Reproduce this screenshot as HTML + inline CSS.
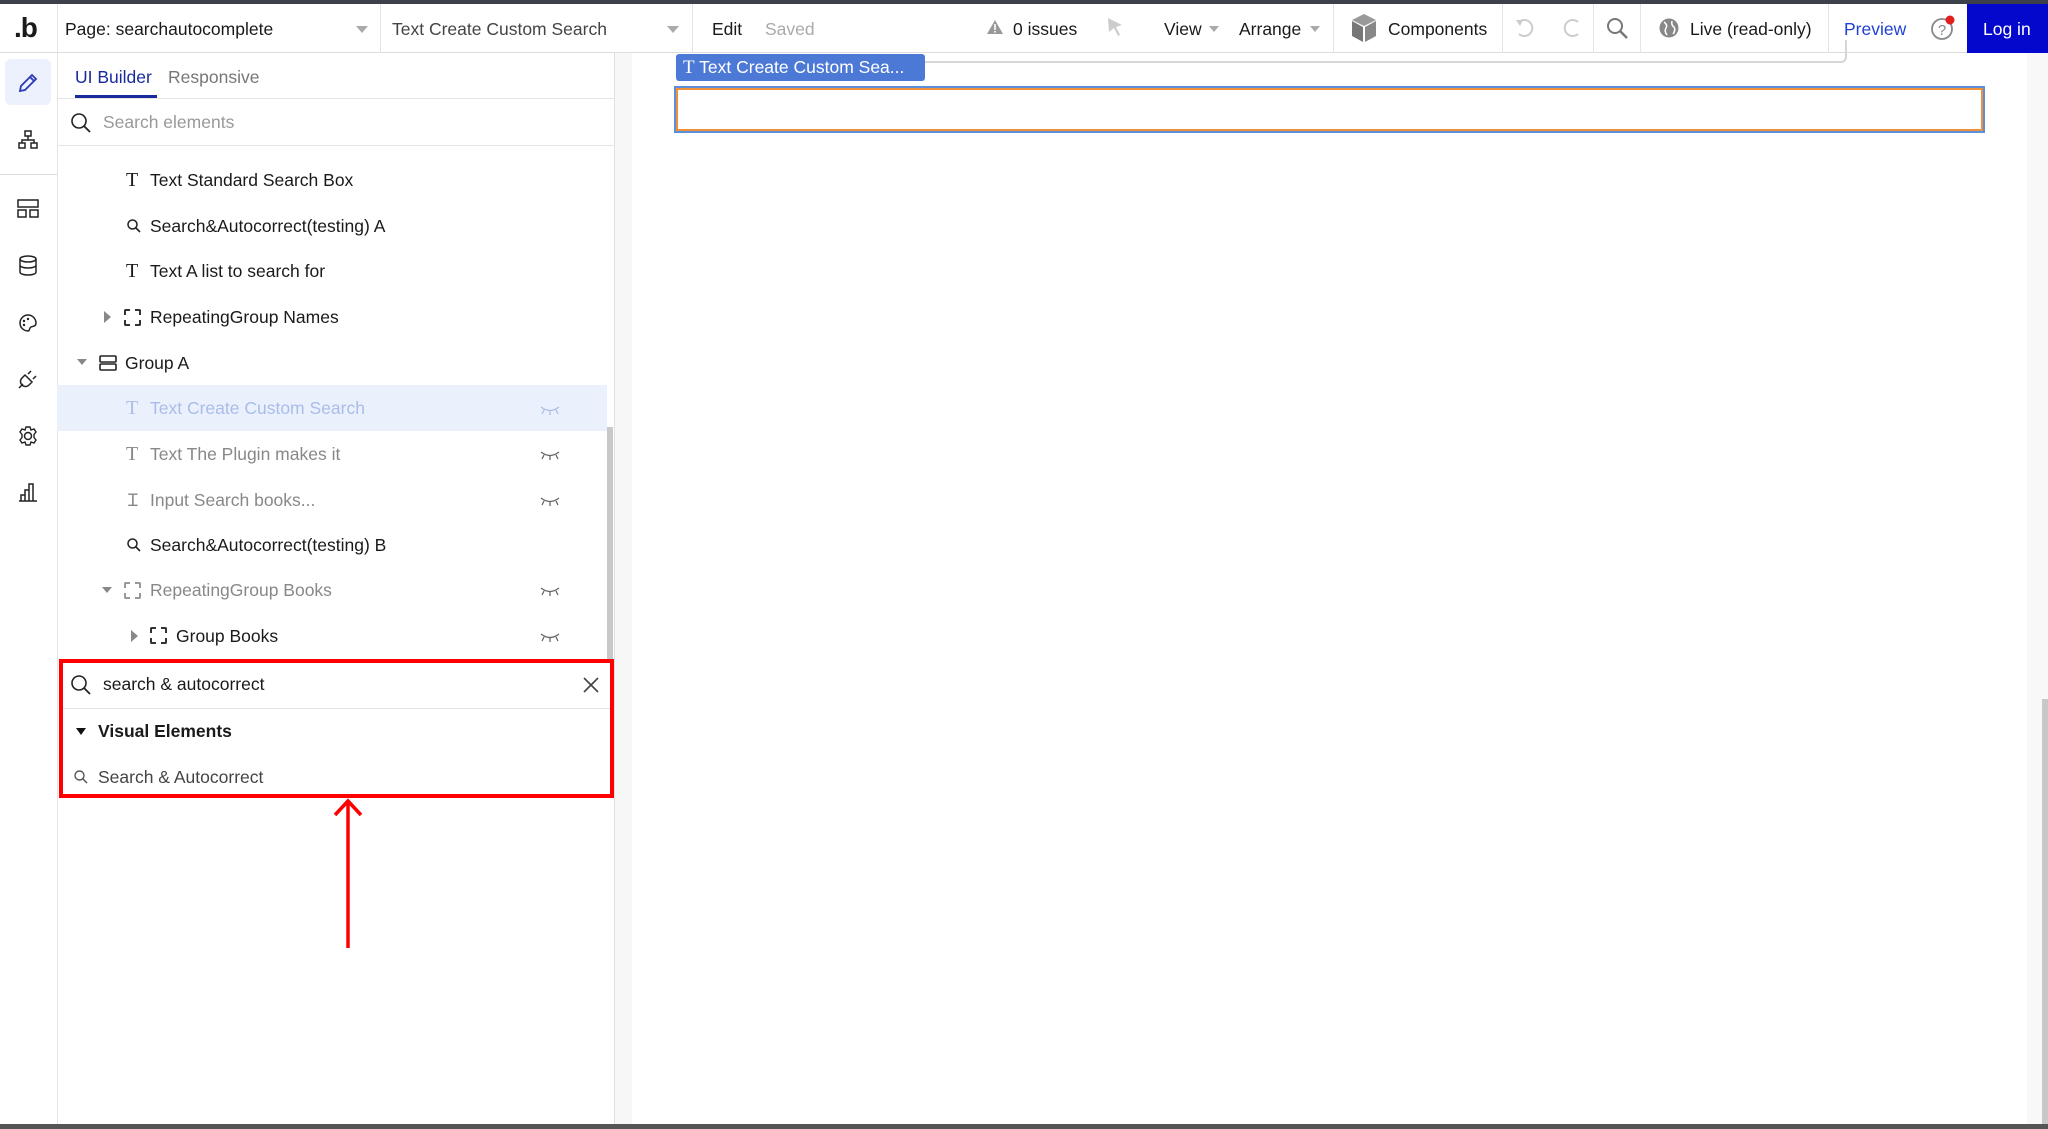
<!DOCTYPE html>
<html><head><meta charset="utf-8"><style>
*{box-sizing:border-box;margin:0;padding:0}
body{width:2048px;height:1129px;position:relative;overflow:hidden;background:#fff;font-family:"Liberation Sans",sans-serif;color:#1a1a1a}
.a{position:absolute}
.t{position:absolute;white-space:nowrap;font-size:17.5px;line-height:22px}
.vd{position:absolute;top:4px;width:1px;height:49px;background:#e4e4e4}
.car{position:absolute;width:0;height:0;border-left:6px solid transparent;border-right:6px solid transparent;border-top:7px solid #aaa}
svg{position:absolute;overflow:visible}
</style></head><body>
<div class="a" style="left:0;top:0;width:2048px;height:4px;background:#3b404b"></div>
<div class="a" style="left:0;top:4px;width:2048px;height:49px;background:#fff;border-bottom:1px solid #dcdcdc"></div>
<div class="t" style="left:14px;top:14px;font-size:28px;font-weight:bold;line-height:28px;letter-spacing:-1px">.b</div>
<div class="vd" style="left:57px"></div>
<div class="t" style="left:65px;top:18px">Page: searchautocomplete</div>
<div class="car" style="left:356px;top:26px"></div>
<div class="vd" style="left:380px"></div>
<div class="t" style="left:392px;top:18px;color:#444">Text Create Custom Search</div>
<div class="car" style="left:667px;top:26px"></div>
<div class="vd" style="left:692px"></div>
<div class="t" style="left:712px;top:18px">Edit</div>
<div class="t" style="left:765px;top:18px;color:#aaa">Saved</div>
<svg style="left:986px;top:19px" width="18" height="16"><path d="M9 1L17 15H1Z" fill="#999"/><rect x="8.2" y="5" width="1.6" height="6" fill="#fff"/><rect x="8.2" y="12" width="1.6" height="1.6" fill="#fff"/></svg>
<div class="t" style="left:1013px;top:18px">0 issues</div>
<svg style="left:1106px;top:17px" width="18" height="20"><path d="M2 1L16 8L10 10L14 18L12 19L8 11L3 15Z" fill="#ccc"/></svg>
<div class="t" style="left:1164px;top:18px">View</div>
<div class="car" style="left:1209px;top:26px;border-width:6px 5px 0"></div>
<div class="t" style="left:1239px;top:18px">Arrange</div>
<div class="car" style="left:1310px;top:26px;border-width:6px 5px 0"></div>
<div class="vd" style="left:1333px"></div>
<svg style="left:1351px;top:13px" width="26" height="30"><path d="M13 1L25 7L13 13L1 7Z" fill="#999"/><path d="M1 8L12 14V29L1 23Z" fill="#777"/><path d="M25 8L14 14V29L25 23Z" fill="#888"/></svg>
<div class="t" style="left:1388px;top:18px">Components</div>
<div class="vd" style="left:1502px"></div>
<svg style="left:1514px;top:17px" width="22" height="22"><path d="M5 5A8 8 0 1 1 5 17" fill="none" stroke="#ccc" stroke-width="2"/><path d="M2 3L6 9L9 3Z" fill="#ccc"/></svg>
<svg style="left:1561px;top:17px" width="22" height="22"><path d="M17 5A8 8 0 1 0 17 17" fill="none" stroke="#ccc" stroke-width="2"/></svg>
<div class="vd" style="left:1593px"></div>
<svg style="left:1606px;top:17px" width="24" height="24"><circle cx="9" cy="9" r="7" fill="none" stroke="#777" stroke-width="2"/><path d="M14 14L21 21" stroke="#777" stroke-width="2.5"/></svg>
<div class="vd" style="left:1640px"></div>
<svg style="left:1659px;top:18px" width="20" height="20"><circle cx="10" cy="10" r="9.5" fill="#888"/><path d="M5 4Q9 7 7 10Q5 13 8 17M13 3Q12 7 15 9Q17 12 14 16" stroke="#fff" stroke-width="1.5" fill="none"/></svg>
<div class="t" style="left:1690px;top:18px">Live (read-only)</div>
<div class="vd" style="left:1828px"></div>
<div class="t" style="left:1844px;top:18px;color:#1f3fd6">Preview</div>
<svg style="left:1930px;top:15px" width="28" height="28"><circle cx="12" cy="14" r="10" fill="none" stroke="#888" stroke-width="1.8"/><text x="12" y="20" font-size="15" text-anchor="middle" fill="#888" font-family="Liberation Sans">?</text><circle cx="20" cy="5" r="4.5" fill="#e0201b"/></svg>
<div class="a" style="left:1967px;top:4px;width:81px;height:49px;background:#0308cc"></div>
<div class="t" style="left:1983px;top:18px;color:#fff">Log in</div>
<div class="a" style="left:57px;top:53px;width:1px;height:1076px;background:#e4e4e4"></div>
<div class="a" style="left:5px;top:59px;width:46px;height:46px;background:#edf1fd;border-radius:6px"></div>
<svg style="left:17px;top:72px" width="22" height="22"><path d="M3 19L4 14L15 3L19 7L8 18Z M13 5L17 9" fill="none" stroke="#2a3bb8" stroke-width="1.8"/></svg>
<svg style="left:18px;top:130px" width="20" height="20"><rect x="7" y="1" width="6" height="5" fill="none" stroke="#222" stroke-width="1.5"/><rect x="1" y="13" width="6" height="5" fill="none" stroke="#222" stroke-width="1.5"/><rect x="13" y="13" width="6" height="5" fill="none" stroke="#222" stroke-width="1.5"/><path d="M10 6V10M4 13V10H16V13" fill="none" stroke="#222" stroke-width="1.5"/></svg>
<div class="a" style="left:0;top:174px;width:57px;height:1px;background:#ddd"></div>
<svg style="left:17px;top:199px" width="22" height="20"><rect x="1" y="1" width="20" height="7" fill="none" stroke="#222" stroke-width="1.5"/><rect x="1" y="11" width="8" height="7" fill="none" stroke="#222" stroke-width="1.5"/><rect x="13" y="11" width="8" height="7" fill="none" stroke="#222" stroke-width="1.5"/></svg>
<svg style="left:18px;top:255px" width="20" height="22"><ellipse cx="10" cy="4" rx="8" ry="3" fill="none" stroke="#222" stroke-width="1.5"/><path d="M2 4V17C2 21 18 21 18 17V4M2 10C2 14 18 14 18 10" fill="none" stroke="#222" stroke-width="1.5"/></svg>
<svg style="left:18px;top:313px" width="20" height="20"><path d="M10 2A8 8 0 1 0 10 18C12 18 11 15 13 14C16 13 18 13 18 10A8 8 0 0 0 10 2Z" fill="none" stroke="#222" stroke-width="1.5"/><circle cx="6" cy="8" r="1.2" fill="#222"/><circle cx="10" cy="6" r="1.2" fill="#222"/><circle cx="6" cy="12" r="1.2" fill="#222"/></svg>
<svg style="left:17px;top:368px" width="22" height="22"><path d="M2 20L6 16M8 7L15 14L12 17C10 19 7 19 5 17C3 15 3 12 5 10ZM11 6L14 3M16 11L19 8" fill="none" stroke="#222" stroke-width="1.5"/></svg>
<svg style="left:17px;top:425px" width="22" height="22"><circle cx="11" cy="11" r="3.5" fill="none" stroke="#222" stroke-width="1.5"/><path d="M9 2H13L14 5L17 4L19 7L17 9.5V12.5L19 15L17 18L14 17L13 20H9L8 17L5 18L3 15L5 12.5V9.5L3 7L5 4L8 5Z" fill="none" stroke="#222" stroke-width="1.4"/></svg>
<svg style="left:18px;top:482px" width="20" height="20"><path d="M1 19H19M3 19V13H7V19M7 19V8H11V19M11 19V2H15V19" fill="none" stroke="#222" stroke-width="1.5"/></svg>
<div class="a" style="left:614px;top:53px;width:1px;height:1076px;background:#e0e0e0"></div>
<div class="a" style="left:615px;top:53px;width:17px;height:1076px;background:#f7f7f7"></div>
<div class="t" style="left:75px;top:66px;color:#1a2a9c">UI Builder</div>
<div class="t" style="left:168px;top:66px;color:#777">Responsive</div>
<div class="a" style="left:75px;top:95px;width:82px;height:3px;background:#1a2a9c"></div>
<div class="a" style="left:57px;top:98px;width:557px;height:1px;background:#e4e4e4"></div>
<svg style="left:70px;top:112px" width="22" height="22"><circle cx="9" cy="9" r="7" fill="none" stroke="#222" stroke-width="1.6"/><path d="M14 14L20 20" stroke="#222" stroke-width="1.8"/></svg>
<div class="t" style="left:103px;top:111px;color:#999">Search elements</div>
<div class="a" style="left:57px;top:145px;width:557px;height:1px;background:#e4e4e4"></div>
<div class="t" style="left:126px;top:169px;font-size:20px;font-family:'Liberation Serif',serif">T</div>
<div class="t" style="left:150px;top:169px">Text Standard Search Box</div>
<svg style="left:127px;top:219px" width="14" height="14"><circle cx="5.5" cy="5.5" r="4.5" fill="none" stroke="#222" stroke-width="1.5"/><path d="M9 9L13 13" stroke="#222" stroke-width="1.6"/></svg>
<div class="t" style="left:150px;top:215px">Search&amp;Autocorrect(testing) A</div>
<div class="t" style="left:126px;top:260px;font-size:20px;font-family:'Liberation Serif',serif">T</div>
<div class="t" style="left:150px;top:260px">Text A list to search for</div>
<svg style="left:104px;top:311px" width="8" height="12"><path d="M0 0L7 6L0 12Z" fill="#888"/></svg>
<div class="a" style="left:124px;top:309px;width:17px;height:17px;border:2px dashed #333;border-radius:2px"></div>
<div class="t" style="left:150px;top:306px">RepeatingGroup Names</div>
<div class="car" style="left:77px;top:359px;border-width:6px 5px 0;border-top-color:#888"></div>
<svg style="left:99px;top:355px" width="18" height="16"><rect x="1" y="1" width="16" height="6" rx="1" fill="none" stroke="#222" stroke-width="1.6"/><rect x="1" y="9" width="16" height="6" rx="1" fill="none" stroke="#222" stroke-width="1.6"/></svg>
<div class="t" style="left:125px;top:352px">Group A</div>
<div class="a" style="left:57px;top:385px;width:550px;height:46px;background:#ebf0fd"></div>
<div class="t" style="left:126px;top:397px;font-size:20px;font-family:'Liberation Serif',serif;color:#a9bde8">T</div>
<div class="t" style="left:150px;top:397px;color:#a9bde8">Text Create Custom Search</div>
<div class="t" style="left:126px;top:443px;font-size:20px;font-family:'Liberation Serif',serif;color:#888">T</div>
<div class="t" style="left:150px;top:443px;color:#888">Text The Plugin makes it</div>
<div class="t" style="left:128px;top:489px;color:#888">Ɪ</div>
<div class="t" style="left:150px;top:489px;color:#888">Input Search books...</div>
<svg style="left:127px;top:538px" width="14" height="14"><circle cx="5.5" cy="5.5" r="4.5" fill="none" stroke="#222" stroke-width="1.5"/><path d="M9 9L13 13" stroke="#222" stroke-width="1.6"/></svg>
<div class="t" style="left:150px;top:534px">Search&amp;Autocorrect(testing) B</div>
<div class="car" style="left:102px;top:587px;border-width:6px 5px 0;border-top-color:#888"></div>
<div class="a" style="left:124px;top:582px;width:17px;height:17px;border:2px dashed #999;border-radius:2px"></div>
<div class="t" style="left:150px;top:579px;color:#888">RepeatingGroup Books</div>
<svg style="left:131px;top:630px" width="8" height="12"><path d="M0 0L7 6L0 12Z" fill="#888"/></svg>
<div class="a" style="left:150px;top:627px;width:17px;height:17px;border:2px dashed #333;border-radius:2px"></div>
<div class="t" style="left:176px;top:625px">Group Books</div>
<svg style="left:540px;top:403px" width="20" height="240" fill="none" stroke-width="1.3">
<g stroke="#a9bde8"><path d="M1 4Q10 11 19 4M4 7L2 11M10 8V12M16 7L18 11"/></g>
<g stroke="#666" transform="translate(0,45)"><path d="M1 4Q10 11 19 4M4 7L2 11M10 8V12M16 7L18 11"/></g>
<g stroke="#666" transform="translate(0,91)"><path d="M1 4Q10 11 19 4M4 7L2 11M10 8V12M16 7L18 11"/></g>
<g stroke="#666" transform="translate(0,181)"><path d="M1 4Q10 11 19 4M4 7L2 11M10 8V12M16 7L18 11"/></g>
<g stroke="#666" transform="translate(0,227)"><path d="M1 4Q10 11 19 4M4 7L2 11M10 8V12M16 7L18 11"/></g>
</svg>
<div class="a" style="left:607px;top:427px;width:6px;height:233px;background:#c8c8c8"></div>
<div class="a" style="left:59px;top:659px;width:555px;height:139px;border:4px solid #ff0000"></div>
<svg style="left:70px;top:674px" width="22" height="22"><circle cx="9" cy="9" r="7" fill="none" stroke="#222" stroke-width="1.6"/><path d="M14 14L20 20" stroke="#222" stroke-width="1.8"/></svg>
<div class="t" style="left:103px;top:673px">search &amp; autocorrect</div>
<svg style="left:583px;top:677px" width="16" height="16"><path d="M1 1L15 15M15 1L1 15" stroke="#444" stroke-width="1.6"/></svg>
<div class="a" style="left:63px;top:708px;width:547px;height:1px;background:#e4e4e4"></div>
<div class="car" style="left:76px;top:728px;border-width:7px 5px 0;border-top-color:#111"></div>
<div class="t" style="left:98px;top:720px;font-weight:bold">Visual Elements</div>
<svg style="left:74px;top:770px" width="14" height="14"><circle cx="5.5" cy="5.5" r="4.5" fill="none" stroke="#555" stroke-width="1.4"/><path d="M9 9L13 13" stroke="#555" stroke-width="1.5"/></svg>
<div class="t" style="left:98px;top:766px;color:#444">Search &amp; Autocorrect</div>
<svg style="left:330px;top:798px" width="36" height="152"><path d="M18 2V150M5 17L18 3L31 17" fill="none" stroke="#ff0000" stroke-width="3.5"/></svg>
<div class="a" style="left:690px;top:40px;width:1157px;height:23px;border:2px solid #d6d6d6;border-top:none;border-left:none;border-radius:0 0 6px 0"></div>
<div class="a" style="left:676px;top:54px;width:249px;height:27px;background:#4d79d6;border-radius:3px"></div>
<div class="t" style="left:683px;top:56px;color:#fff;font-size:17.5px"><span style="font-family:'Liberation Serif',serif;font-size:19px">T</span> Text Create Custom Sea...</div>
<div class="a" style="left:674px;top:86px;width:1311px;height:47px;border:2px solid #5b8fdc"></div>
<div class="a" style="left:676px;top:88px;width:1307px;height:43px;border:2px solid #f0913a"></div>
<div class="a" style="left:2027px;top:53px;width:21px;height:1072px;background:#f8f8f8"></div>
<div class="a" style="left:2042px;top:699px;width:6px;height:425px;background:#c8c8c8"></div>
<div class="a" style="left:0;top:1124px;width:2048px;height:5px;background:#555"></div>
</body></html>
